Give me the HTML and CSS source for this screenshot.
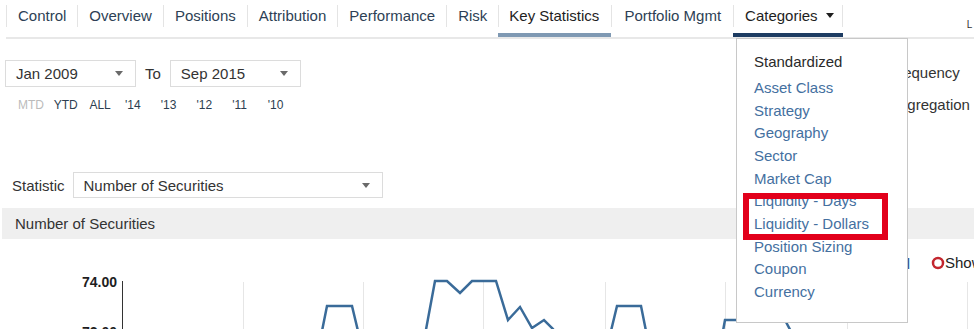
FILE: index.html
```html
<!DOCTYPE html>
<html>
<head>
<meta charset="utf-8">
<link rel="stylesheet" href="styles.css">
</head>
<body>
<div class="page">
  <nav class="nav">
    <a class="tab"><span class="lbl">Control</span></a>
    <a class="tab"><span class="lbl">Overview</span></a>
    <a class="tab"><span class="lbl">Positions</span></a>
    <a class="tab"><span class="lbl">Attribution</span></a>
    <a class="tab"><span class="lbl">Performance</span></a>
    <a class="tab"><span class="lbl">Risk</span></a>
    <a class="tab current"><span class="lbl">Key Statistics</span></a>
    <a class="tab wide"><span class="lbl">Portfolio Mgmt</span></a>
    <a class="tab open last"><span class="lbl">Categories <i class="caret"></i></span></a>
    <span class="user">L</span>
  </nav>

  <section class="controls">
    <div class="left">
      <div class="daterow">
        <div class="select date"><span>Jan 2009</span><i class="arrow"></i></div>
        <span class="to">To</span>
        <div class="select date"><span>Sep 2015</span><i class="arrow"></i></div>
      </div>
      <div class="quick">
        <a class="q disabled">MTD</a>
        <a class="q">YTD</a>
        <a class="q">ALL</a>
        <a class="q">'14</a>
        <a class="q">'13</a>
        <a class="q">'12</a>
        <a class="q">'11</a>
        <a class="q">'10</a>
      </div>
    </div>
    <div class="right">
      <div class="opt">Frequency</div>
      <div class="opt second">Aggregation</div>
    </div>
  </section>

  <section class="statrow">
    <span class="statlabel">Statistic</span>
    <div class="select stat"><span>Number of Securities</span><i class="arrow"></i></div>
  </section>

  <div class="band">Number of Securities</div>

  <div class="chart">
    <svg width="974" height="90" viewBox="0 0 974 90">
      <g class="grid">
        <line x1="243.5" y1="43" x2="243.5" y2="90"/>
        <line x1="363.5" y1="43" x2="363.5" y2="90"/>
        <line x1="483.5" y1="43" x2="483.5" y2="90"/>
        <line x1="605.5" y1="43" x2="605.5" y2="90"/>
        <line x1="725.5" y1="43" x2="725.5" y2="90"/>
        <line x1="847.5" y1="43" x2="847.5" y2="90"/>
        <line x1="967.5" y1="43" x2="967.5" y2="90"/>
      </g>
      <line class="axis" x1="122.5" y1="42" x2="122.5" y2="90"/>
      <text class="ylab" x="117" y="48">74.00</text>
      <text class="ylab" x="117" y="98">72.00</text>
      <polyline class="series" points="300,130 322,92 327,67 352,67 358,92 380,130 415,130 425,96 435,42 447,42 460,54 472,42 496,42 508,81 520,68 532,89 544,81 553,90 565,110 600,120 610,96 617,67 641,67 646,92 660,120 715,120 723,92 725,81 760,81 775,60 786,83 795,100"/>
      <text class="legend-total" x="910" y="30">Total</text>
      <circle class="ring" cx="938" cy="24" r="5"/>
      <text class="legend" x="945" y="29">Show</text>
    </svg>
  </div>

  <div class="menu">
    <div class="menu-head">Standardized</div>
    <a class="mi">Asset Class</a>
    <a class="mi">Strategy</a>
    <a class="mi">Geography</a>
    <a class="mi">Sector</a>
    <a class="mi">Market Cap</a>
    <a class="mi">Liquidity - Days</a>
    <a class="mi">Liquidity - Dollars</a>
    <a class="mi">Position Sizing</a>
    <a class="mi">Coupon</a>
    <a class="mi">Currency</a>
    <div class="highlight"></div>
  </div>
</div>
</body>
</html>
```

FILE: styles.css
```css
* { box-sizing: border-box; }
html, body { margin: 0; padding: 0; background: #fff; }
body {
  font-family: "Liberation Sans", Arial, sans-serif;
  color: #333;
  width: 974px;
  height: 329px;
  overflow: hidden;
}
.page { position: relative; width: 974px; height: 329px; overflow: hidden; }

/* nav */
.nav {
  display: flex;
  margin-left: 6px;
  height: 39px;
  border-bottom: 2px solid #e8e8e8;
  white-space: nowrap;
}
.tab {
  display: block;
  height: 37px;
  border-bottom: 4px solid transparent;
  font-size: 15px;
  color: #2d3f55;
}
.tab .lbl {
  display: flex;
  align-items: center;
  margin-top: 5px;
  height: 22px;
  line-height: 22px;
  padding: 0 11px;
  border-left: 1px solid #e4e4e4;
}
.tab.current .lbl { padding: 0 12px 0 10px; }
.tab.wide .lbl { padding: 0 12px; }
.tab.last .lbl { border-right: 1px solid #e4e4e4; padding-right: 8px; }
.tab.current { border-bottom-color: #7f99b3; color: #1e1e1e; }
.tab.open { border-bottom-color: #1d3c62; color: #1e1e1e; }
.caret {
  display: inline-block;
  width: 0; height: 0;
  margin-left: 8px;
  border-left: 4px solid transparent;
  border-right: 4px solid transparent;
  border-top: 5px solid #1e1e1e;
  position: relative; top: -1px;
}
.user {
  margin-left: 124px;
  padding-top: 19px;
  font-size: 10px;
  color: #333;
}

/* controls */
.controls {
  display: flex;
  padding: 21px 0 0 5px;
}
.left { flex: 1; }
.daterow { display: flex; align-items: center; }
.select {
  display: flex;
  align-items: center;
  justify-content: space-between;
  border: 1px solid #dcdcdc;
  background: #fff;
  font-size: 15px;
  color: #333;
  padding: 0 12px 0 10px;
}
.select.date { width: 131px; height: 27px; }
.to { font-size: 15px; margin: 0 9px 0 9px; color: #333; }
.arrow {
  display: block;
  width: 0; height: 0;
  border-left: 4px solid transparent;
  border-right: 4px solid transparent;
  border-top: 5px solid #6a6a6a;
}
.quick {
  display: grid;
  grid-template-columns: repeat(8, 35.7px);
  margin-top: 11px;
  padding-left: 13px;
  font-size: 12px;
  line-height: 14px;
}
.q { color: #2c3e50; }
.q.disabled { color: #bbbbbb; }
.right {
  width: 85px;
  padding-top: 2px;
  white-space: nowrap;
  font-size: 15px;
  color: #333;
}
.opt { line-height: 22px; }
.opt.second { margin-top: 10px; }

/* statistic */
.statrow {
  display: flex;
  align-items: center;
  margin-top: 56px;
  padding-left: 12px;
}
.statlabel { font-size: 15px; color: #333; margin-right: 8px; }
.select.stat { width: 310px; height: 26px; }

.band {
  margin: 10px 0 0 2px;
  height: 31px;
  line-height: 31px;
  background: #efefef;
  padding-left: 13px;
  font-size: 15px;
  color: #333;
}

/* chart */
.chart { height: 90px; }
.chart svg { display: block; }
.grid line { stroke: #e6e6e6; stroke-width: 1; }
.axis { stroke: #333; stroke-width: 1; }
.ylab {
  font-family: "Liberation Sans", Arial, sans-serif;
  font-size: 14px;
  font-weight: bold;
  fill: #1e1e1e;
  text-anchor: end;
}
.series { fill: none; stroke: #3a6b99; stroke-width: 2.5; stroke-linejoin: miter; }
.ring { fill: none; stroke: #c3262e; stroke-width: 2.5; }
.legend { font-family: "Liberation Sans", Arial, sans-serif; font-size: 15px; fill: #222; }
.legend-total { font-family: "Liberation Sans", Arial, sans-serif; font-size: 15px; fill: #24508a; text-anchor: end; }

/* dropdown menu (overlay) */
.menu {
  position: absolute;
  left: 736px;
  top: 38px;
  width: 172px;
  height: 285px;
  background: #fff;
  border: 1px solid #c8c8c8;
  padding: 12px 0 0 17px;
  z-index: 10;
}
.menu-head {
  font-size: 15px;
  line-height: 22.7px;
  color: #2a2a2a;
  margin-bottom: 3.3px;
}
.mi {
  display: block;
  font-size: 15px;
  line-height: 22.67px;
  color: #44709f;
  white-space: nowrap;
}
.highlight {
  position: absolute;
  left: 6px;
  top: 154px;
  width: 145px;
  height: 47px;
  border: 6px solid #e2001b;
}
```
